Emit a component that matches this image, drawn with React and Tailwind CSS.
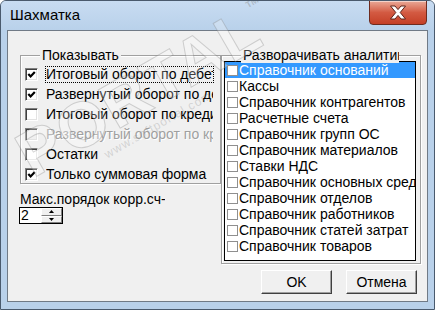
import React from 'react'

const showItems = [
  { label: 'Итоговый оборот по дебету', checked: true, focus: true },
  { label: 'Развернутый оборот по дебету', checked: true },
  { label: 'Итоговый оборот по кредиту', checked: false },
  { label: 'Развернутый оборот по кредиту', checked: false, disabled: true },
  { label: 'Остатки', checked: false },
  { label: 'Только суммовая форма', checked: true },
]

const analytics = [
  'Справочник оснований',
  'Кассы',
  'Справочник контрагентов',
  'Расчетные счета',
  'Справочник групп ОС',
  'Справочник материалов',
  'Ставки НДС',
  'Справочник основных средств',
  'Справочник отделов',
  'Справочник работников',
  'Справочник статей затрат',
  'Справочник товаров',
]

function CheckMark() {
  return (
    <svg width="9" height="9" viewBox="0 0 9 9">
      <path d="M1.3 4 L3.6 6.5 L7.8 2" fill="none" stroke="#000" strokeWidth="2.2" />
    </svg>
  )
}

function Check({ checked, disabled }) {
  return (
    <div
      className={`w-[13px] h-[13px] shrink-0 flex items-center justify-center border border-t-[#808080] border-l-[#808080] border-r-white border-b-white shadow-[inset_1px_1px_0_#404040,inset_-1px_-1px_0_#e3e3e3] ${
        disabled ? 'bg-[#f0f0f0]' : 'bg-white'
      }`}
    >
      {checked && <CheckMark />}
    </div>
  )
}

function GroupBox({ title, className, titleClass, children }) {
  return (
    <div className={`relative border border-[#a0a0a0] shadow-[1px_1px_0_#fff,inset_1px_1px_0_#fff] ${className}`}>
      <div
        className={`absolute left-[19px] -top-[9px] px-[2px] bg-[#f0f0f0] leading-[16px] whitespace-nowrap overflow-hidden ${titleClass || ''}`}
      >
        {title}
      </div>
      {children}
    </div>
  )
}

function WinButton({ children }) {
  return (
    <button className="w-[71px] h-[24px] bg-[#f0f0f0] border border-t-white border-l-white border-r-[#404040] border-b-[#404040] shadow-[inset_-1px_-1px_0_#a0a0a0] leading-[16px] text-black">
      {children}
    </button>
  )
}

export default function App() {
  return (
    <div className="relative w-[435px] h-[310px] overflow-hidden flex flex-col bg-[#b9d1ea] border border-[#4a5a6d] rounded-t-[6px] font-['Liberation_Sans',Arial,sans-serif] text-[14px] text-black">
      {/* title bar */}
      <div className="relative h-[29px] shrink-0 bg-gradient-to-b from-[#c8dcf2] to-[#b9d1ea] flex items-center pl-[9px] pb-[1px]">
        <span className="text-[15px] leading-[18px]">Шахматка</span>
        <div className="absolute right-[7px] -top-px w-[58px] h-[25px] rounded-b-[4px] border border-[#6d2b1f] bg-gradient-to-b from-[#e9a897] via-[#d35a42] to-[#c43f26] shadow-[inset_0_1px_0_rgba(255,255,255,0.5)] flex items-center justify-center">
          <svg width="18" height="15" viewBox="0 0 18 15">
            <path
              d="M1.5 1 H6 L9 4.6 L12 1 H16.5 L11.2 7.5 L16.5 14 H12 L9 10.4 L6 14 H1.5 L6.8 7.5 Z"
              fill="#fff"
              stroke="#5b2218"
              strokeWidth="1"
              strokeLinejoin="round"
            />
          </svg>
        </div>
      </div>

      {/* client area */}
      <div className="flex-1 mx-[6px] mb-[7px] border border-[#707a86] bg-[#f0f0f0] flex flex-col">
        <div className="flex pt-[24px] pl-[12px]">
          <div className="flex flex-col w-[201px]">
            <GroupBox title="Показывать" className="h-[129px]">
              <div className="flex flex-col pt-[8px] pl-[4px] pr-[6px]">
                {showItems.map((it) => (
                  <div key={it.label} className="h-[20px] flex items-center gap-[7px]">
                    <Check checked={it.checked} disabled={it.disabled} />
                    <span
                      className={`flex-1 min-w-0 h-[17px] leading-[15px] overflow-hidden whitespace-nowrap border ${
                        it.focus ? 'border-dotted border-black' : 'border-transparent'
                      } ${it.disabled ? 'text-[#a0a0a0] [text-shadow:1px_1px_0_#fff]' : ''}`}
                    >
                      {it.label}
                    </span>
                  </div>
                ))}
              </div>
            </GroupBox>
            <div className="mt-[8px] leading-[15px] w-[145px] overflow-hidden whitespace-nowrap">Макс.порядок корр.сч-та</div>
            <div className="-ml-px w-[44px] h-[17px] border border-black bg-white flex">
              <div className="flex-1 pl-[1px] leading-[15px]">2</div>
              <div className="w-[21px] flex flex-col">
                {['up', 'down'].map((d) => (
                  <div
                    key={d}
                    className="flex-1 bg-[#f0f0f0] border border-t-white border-l-white border-r-[#808080] border-b-[#808080] flex items-center justify-center"
                  >
                    <svg width="5" height="3" viewBox="0 0 5 3">
                      <path d={d === 'up' ? 'M2.5 0 L5 3 H0 Z' : 'M0 0 H5 L2.5 3 Z'} fill="#000" />
                    </svg>
                  </div>
                ))}
              </div>
            </div>
          </div>

          <GroupBox
            title="Разворачивать аналитику"
            className="w-[200px] h-[209px]"
            titleClass="w-[158px]"
          >
            <div className="ml-[2px] mt-[5px] w-[192px] h-[200px] border border-black bg-white overflow-hidden">
              {analytics.map((name, i) => {
                const sel = i === 0
                return (
                  <div
                    key={name}
                    className={`h-[16px] flex items-center whitespace-nowrap ${sel ? 'bg-[#3399ff] text-white' : ''}`}
                  >
                    <div className="ml-[2px] w-[11px] h-[11px] shrink-0 border border-[#8f8f8f] bg-white" />
                    <span className="ml-[1px] leading-[16px]">{name}</span>
                  </div>
                )
              })}
            </div>
          </GroupBox>
        </div>

        <div className="flex justify-end gap-[14px] pr-[10px] mt-[6px]">
          <WinButton>OK</WinButton>
          <WinButton>Отмена</WinButton>
        </div>
      </div>

      {/* watermark */}
      <div className="pointer-events-none absolute left-[-24px] top-[58px] w-[330px] -rotate-[30deg] origin-center flex flex-col items-center">
        <div className="relative text-[64px] font-bold leading-[64px] tracking-[2px] text-white/25 [-webkit-text-stroke:1px_rgba(120,120,120,0.3)]">
          PORTAL
          <span className="absolute -right-[14px] top-[6px] text-[9px] leading-[10px] tracking-normal [-webkit-text-stroke:0] text-[#888]/40">
            TM
          </span>
        </div>
        <div className="text-[12px] leading-[12px] text-[#8a8a8a]/30 tracking-[1px]">www.softportal.com</div>
      </div>
    </div>
  )
}
